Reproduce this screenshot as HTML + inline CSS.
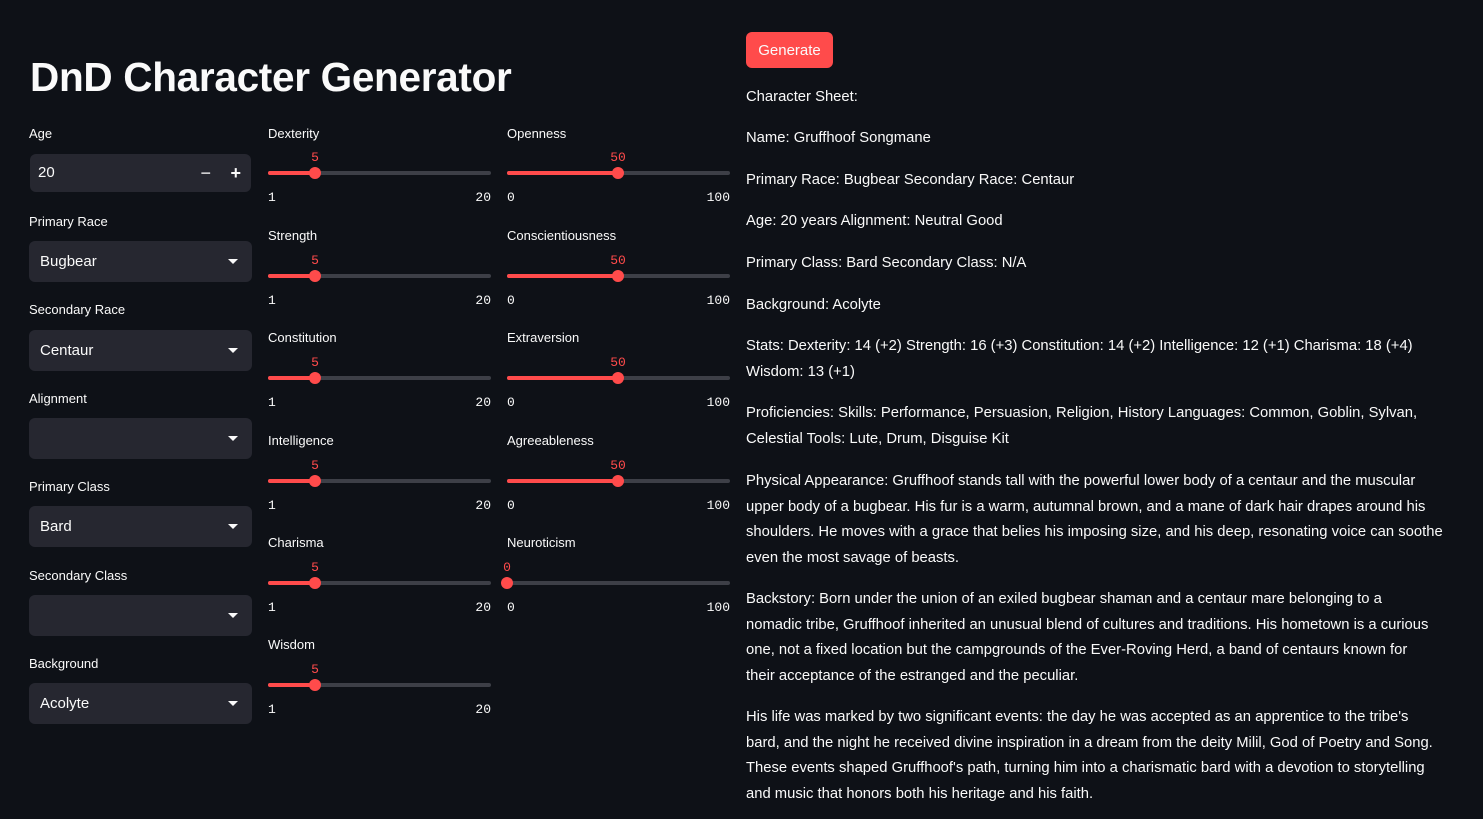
<!DOCTYPE html>
<html><head><meta charset="utf-8"><style>
*{margin:0;padding:0;box-sizing:border-box}
body{width:1483px;height:819px;background:#0e1117;color:#fafafa;font-family:"Liberation Sans",sans-serif;position:relative;overflow:hidden}
.a{position:absolute}
.lbl{position:absolute;font-size:13px;color:#fafafa}
.box{position:absolute;background:#262730;border-radius:6px;left:29px;width:223px;height:41px;font-size:15px;padding-left:11px;line-height:41px}
.box .car{position:absolute;right:14px;top:18px;width:0;height:0;border-left:5px solid transparent;border-right:5px solid transparent;border-top:5px solid #fafafa}
.tr{position:absolute;height:4px;background:#3d3f47;border-radius:2px;width:223px}
.fill{position:absolute;left:0;top:0;height:4px;background:#ff4b4b;border-radius:2px}
.th{position:absolute;width:12px;height:12px;border-radius:50%;background:#ff4b4b;top:-4px;margin-left:-6px}
.val{position:absolute;font-family:"Liberation Mono",monospace;font-size:13px;color:#ff4b4b;top:-21px;transform:translateX(-50%)}
.mm{position:absolute;font-family:"Liberation Mono",monospace;font-size:13px;top:19px}
.p{position:absolute;left:746px;font-size:14.8px;line-height:25.5px;white-space:nowrap}
</style></head><body>
<div class="a" style="left:30px;top:54px;font-size:40.5px;font-weight:bold;letter-spacing:-0.3px">DnD Character Generator</div>

<div class="lbl" style="left:29px;top:126px">Age</div>
<div class="box" style="top:154px;left:30px;width:221px;height:38px;line-height:38px;padding-left:8px">20<span class="a" style="right:40px;top:0;font-size:18px">−</span><span class="a" style="right:10px;top:0;font-size:18px;font-weight:bold">+</span></div>
<div class="lbl" style="left:29px;top:214px">Primary Race</div>
<div class="box" style="top:241px">Bugbear<span class="car"></span></div>
<div class="lbl" style="left:29px;top:302px">Secondary Race</div>
<div class="box" style="top:330px">Centaur<span class="car"></span></div>
<div class="lbl" style="left:29px;top:391px">Alignment</div>
<div class="box" style="top:418px"><span class="car"></span></div>
<div class="lbl" style="left:29px;top:479px">Primary Class</div>
<div class="box" style="top:506px">Bard<span class="car"></span></div>
<div class="lbl" style="left:29px;top:568px">Secondary Class</div>
<div class="box" style="top:595px"><span class="car"></span></div>
<div class="lbl" style="left:29px;top:656px">Background</div>
<div class="box" style="top:683px">Acolyte<span class="car"></span></div>

<div class="lbl" style="left:268px;top:126px">Dexterity</div>
<div class="tr" style="left:268px;top:171px"><div class="fill" style="width:47px"></div><div class="th" style="left:47px"></div><div class="val" style="left:47px">5</div><div class="mm" style="left:0">1</div><div class="mm" style="right:0">20</div></div>
<div class="lbl" style="left:268px;top:228px">Strength</div>
<div class="tr" style="left:268px;top:274px"><div class="fill" style="width:47px"></div><div class="th" style="left:47px"></div><div class="val" style="left:47px">5</div><div class="mm" style="left:0">1</div><div class="mm" style="right:0">20</div></div>
<div class="lbl" style="left:268px;top:330px">Constitution</div>
<div class="tr" style="left:268px;top:376px"><div class="fill" style="width:47px"></div><div class="th" style="left:47px"></div><div class="val" style="left:47px">5</div><div class="mm" style="left:0">1</div><div class="mm" style="right:0">20</div></div>
<div class="lbl" style="left:268px;top:433px">Intelligence</div>
<div class="tr" style="left:268px;top:479px"><div class="fill" style="width:47px"></div><div class="th" style="left:47px"></div><div class="val" style="left:47px">5</div><div class="mm" style="left:0">1</div><div class="mm" style="right:0">20</div></div>
<div class="lbl" style="left:268px;top:535px">Charisma</div>
<div class="tr" style="left:268px;top:581px"><div class="fill" style="width:47px"></div><div class="th" style="left:47px"></div><div class="val" style="left:47px">5</div><div class="mm" style="left:0">1</div><div class="mm" style="right:0">20</div></div>
<div class="lbl" style="left:268px;top:637px">Wisdom</div>
<div class="tr" style="left:268px;top:683px"><div class="fill" style="width:47px"></div><div class="th" style="left:47px"></div><div class="val" style="left:47px">5</div><div class="mm" style="left:0">1</div><div class="mm" style="right:0">20</div></div>

<div class="lbl" style="left:507px;top:126px">Openness</div>
<div class="tr" style="left:507px;top:171px"><div class="fill" style="width:111px"></div><div class="th" style="left:111px"></div><div class="val" style="left:111px">50</div><div class="mm" style="left:0">0</div><div class="mm" style="right:0">100</div></div>
<div class="lbl" style="left:507px;top:228px">Conscientiousness</div>
<div class="tr" style="left:507px;top:274px"><div class="fill" style="width:111px"></div><div class="th" style="left:111px"></div><div class="val" style="left:111px">50</div><div class="mm" style="left:0">0</div><div class="mm" style="right:0">100</div></div>
<div class="lbl" style="left:507px;top:330px">Extraversion</div>
<div class="tr" style="left:507px;top:376px"><div class="fill" style="width:111px"></div><div class="th" style="left:111px"></div><div class="val" style="left:111px">50</div><div class="mm" style="left:0">0</div><div class="mm" style="right:0">100</div></div>
<div class="lbl" style="left:507px;top:433px">Agreeableness</div>
<div class="tr" style="left:507px;top:479px"><div class="fill" style="width:111px"></div><div class="th" style="left:111px"></div><div class="val" style="left:111px">50</div><div class="mm" style="left:0">0</div><div class="mm" style="right:0">100</div></div>
<div class="lbl" style="left:507px;top:535px">Neuroticism</div>
<div class="tr" style="left:507px;top:581px"><div class="th" style="left:0;margin-left:-6px"></div><div class="val" style="left:0">0</div><div class="mm" style="left:0">0</div><div class="mm" style="right:0">100</div></div>

<div class="a" style="left:746px;top:32px;width:87px;height:36px;background:#ff4b4b;border-radius:6px;font-size:15px;line-height:37px;text-align:center">Generate</div>
<div class="p" style="top:85px">Character Sheet:</div>
<div class="p" style="top:126px">Name: Gruffhoof Songmane</div>
<div class="p" style="top:168px">Primary Race: Bugbear Secondary Race: Centaur</div>
<div class="p" style="top:209px">Age: 20 years Alignment: Neutral Good</div>
<div class="p" style="top:251px">Primary Class: Bard Secondary Class: N/A</div>
<div class="p" style="top:293px">Background: Acolyte</div>
<div class="p" style="top:334px">Stats: Dexterity: 14 (+2) Strength: 16 (+3) Constitution: 14 (+2) Intelligence: 12 (+1) Charisma: 18 (+4)<br>Wisdom: 13 (+1)</div>
<div class="p" style="top:401px">Proficiencies: Skills: Performance, Persuasion, Religion, History Languages: Common, Goblin, Sylvan,<br>Celestial Tools: Lute, Drum, Disguise Kit</div>
<div class="p" style="top:469px">Physical Appearance: Gruffhoof stands tall with the powerful lower body of a centaur and the muscular<br>upper body of a bugbear. His fur is a warm, autumnal brown, and a mane of dark hair drapes around his<br>shoulders. He moves with a grace that belies his imposing size, and his deep, resonating voice can soothe<br>even the most savage of beasts.</div>
<div class="p" style="top:587px">Backstory: Born under the union of an exiled bugbear shaman and a centaur mare belonging to a<br>nomadic tribe, Gruffhoof inherited an unusual blend of cultures and traditions. His hometown is a curious<br>one, not a fixed location but the campgrounds of the Ever-Roving Herd, a band of centaurs known for<br>their acceptance of the estranged and the peculiar.</div>
<div class="p" style="top:705px">His life was marked by two significant events: the day he was accepted as an apprentice to the tribe's<br>bard, and the night he received divine inspiration in a dream from the deity Milil, God of Poetry and Song.<br>These events shaped Gruffhoof's path, turning him into a charismatic bard with a devotion to storytelling<br>and music that honors both his heritage and his faith.</div>
</body></html>
